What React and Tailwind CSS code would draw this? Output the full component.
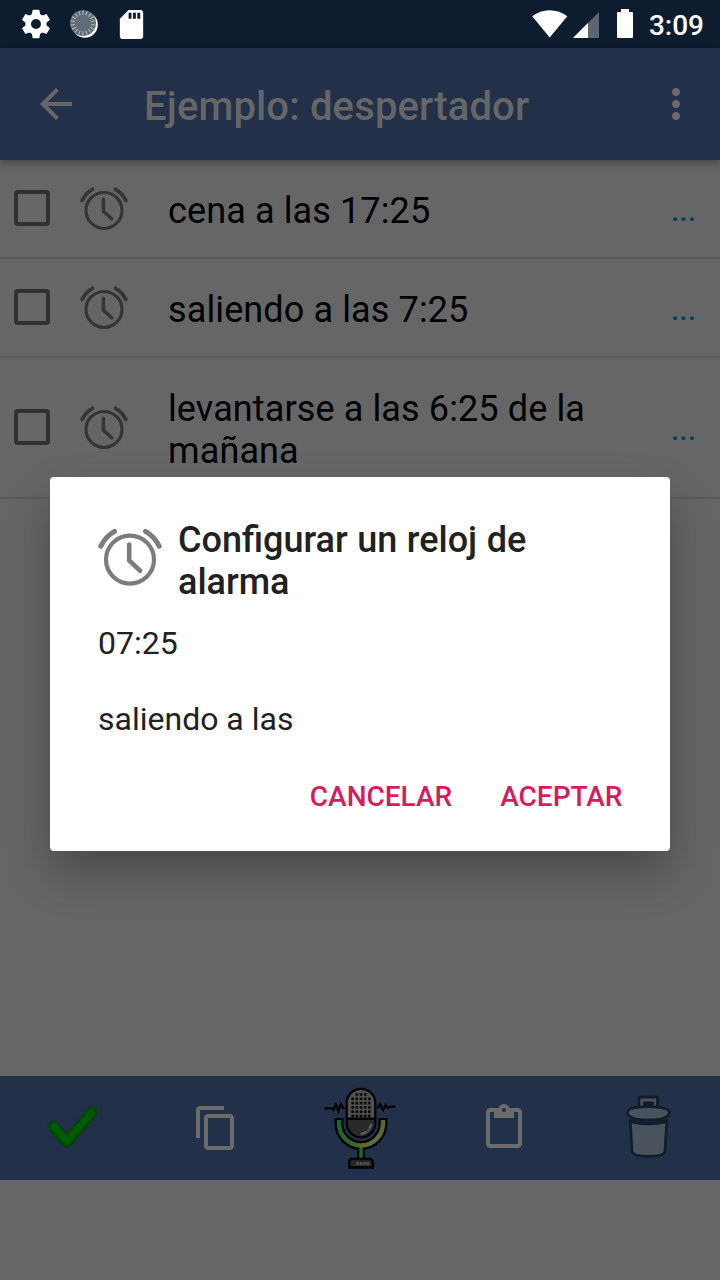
const spokes = Array.from({ length: 18 }, (_, i) => i * 20);

function Icon({ d, className }) {
  return (
    <svg viewBox="0 0 24 24" className={className} fill="currentColor">
      <path d={d} />
    </svg>
  );
}

const paths = {
  settings:
    "M19.43 12.98c.04-.32.07-.64.07-.98s-.03-.66-.07-.98l2.11-1.65c.19-.15.24-.42.12-.64l-2-3.46c-.12-.22-.39-.3-.61-.22l-2.49 1c-.52-.4-1.08-.73-1.69-.98l-.38-2.65C14.46 2.18 14.25 2 14 2h-4c-.25 0-.46.18-.49.42l-.38 2.65c-.61.25-1.17.59-1.69.98l-2.49-1c-.23-.09-.49 0-.61.22l-2 3.46c-.13.22-.07.49.12.64l2.11 1.65c-.04.32-.07.65-.07.98s.03.66.07.98l-2.11 1.65c-.19.15-.24.42-.12.64l2 3.46c.12.22.39.3.61.22l2.49-1c.52.4 1.08.73 1.69.98l.38 2.65c.03.24.24.42.49.42h4c.25 0 .46-.18.49-.42l.38-2.65c.61-.25 1.17-.59 1.69-.98l2.49 1c.23.09.49 0 .61-.22l2-3.46c.12-.22.07-.49-.12-.64l-2.11-1.65zM12 15.5c-1.93 0-3.5-1.57-3.5-3.5s1.57-3.5 3.5-3.5 3.5 1.57 3.5 3.5-1.57 3.5-3.5 3.5z",
  sdCard:
    "M18 2h-8L4.02 8 4 20c0 1.1.9 2 2 2h12c1.1 0 2-.9 2-2V4c0-1.1-.9-2-2-2zm-6 6h-2V4h2v4zm3 0h-2V4h2v4zm3 0h-2V4h2v4z",
  back: "M20 11H7.83l5.59-5.59L12 4l-8 8 8 8 1.41-1.41L7.83 13H20v-2z",
  more: "M12 8c1.1 0 2-.9 2-2s-.9-2-2-2-2 .9-2 2 .9 2 2 2zm0 2c-1.1 0-2 .9-2 2s.9 2 2 2 2-.9 2-2-.9-2-2-2zm0 6c-1.1 0-2 .9-2 2s.9 2 2 2 2-.9 2-2-.9-2-2-2z",
  copy: "M16 1H4c-1.1 0-2 .9-2 2v14h2V3h12V1zm3 4H8c-1.1 0-2 .9-2 2v14c0 1.1.9 2 2 2h11c1.1 0 2-.9 2-2V7c0-1.1-.9-2-2-2zm0 16H8V7h11v14z",
  paste:
    "M19 2h-4.18C14.4.84 13.3 0 12 0c-1.3 0-2.4.84-2.82 2H5c-1.1 0-2 .9-2 2v16c0 1.1.9 2 2 2h14c1.1 0 2-.9 2-2V4c0-1.1-.9-2-2-2zm-7 0c.55 0 1 .45 1 1s-.45 1-1 1-1-.45-1-1 .45-1 1-1zm7 18H5V4h2v3h10V4h2v16z",
};

function AlarmIcon({ className }) {
  return (
    <svg viewBox="0 0 64 60" className={className} fill="none" stroke="currentColor" strokeLinecap="round" strokeLinejoin="round">
      <circle cx="32" cy="32.6" r="24" strokeWidth="4.2" />
      <path d="M31.200 17.500L31.2 33.5L42.2 43.8" strokeWidth="4.600" />
      <path d="M2.8 19.2Q7.500 9.500 16.500 4.400M47.500 4.400Q56.500 9.500 61.200 19.200" strokeWidth="5" />
    </svg>
  );
}

function Spinner() {
  return (
    <svg viewBox="0 0 28 28" className="size-7">
      <circle cx="14.8" cy="14.8" r="13" fill="#fff" />
      <circle cx="13" cy="13" r="13" fill="#616c78" />
      <g stroke="#b8bdc3" strokeWidth="1">
        {spokes.map((a) => (
          <path key={a} d="M13 .6V4.800" transform={`rotate(${a} 13 13)`} />
        ))}
      </g>
    </svg>
  );
}

function StatusBar() {
  return (
    <div className="flex h-12 items-center bg-[#0d1c2e] pl-[19px] pr-4 text-white">
      <Icon d={paths.settings} className="size-[34px]" />
      <div className="ml-[17px] w-7"><Spinner /></div>
      <Icon d={paths.sdCard} className="ml-4 size-[35px]" />
      <svg viewBox="0 0 36 28" className="ml-auto h-7 w-9" fill="currentColor">
        <path d="M.2 6.2C10-1.9 25.500-1.900 35.300 6.200L17.700 27.500Z" />
      </svg>
      <svg viewBox="0 0 26 26" className="ml-[5px] mt-[2px] size-[26px]" fill="currentColor">
        <path d="M0 26L26 0V26Z" opacity=".33" />
        <path d="M0 26L15 11V26Z" />
      </svg>
      <svg viewBox="0 0 16 29" className="mb-[2px] ml-[18px] h-[29px] w-4" fill="currentColor">
        <path d="M4 0H12V3H15Q16 3 16 4V28Q16 29 15 29H1Q0 29 0 28V4Q0 3 1 3H4Z" />
      </svg>
      <span className="ml-4 pt-[3px] text-[28px] font-medium leading-8">3:09</span>
    </div>
  );
}

function Row({ children }) {
  return (
    <li className="flex items-center border-b-2 border-[#5b5b5b] pl-[14px] pr-6">
      <span className="mb-px size-9 rounded-[4px] border-4 border-[#303030]" />
      <AlarmIcon className="mb-px ml-[30px] h-[45px] w-12 text-[#353535]" />
      <p className="ml-10 w-[450px] pb-[25px] pt-[30px] text-[36px] leading-[42px] tracking-[0.12px] text-black">{children}</p>
      <button className="ml-auto pt-[5px] text-[30px] font-medium leading-8 text-[#00425a]">...</button>
    </li>
  );
}

function CheckIcon() {
  return (
    <svg viewBox="0 0 50 44" className="h-11 w-[50px]" fill="none" strokeLinecap="round" strokeLinejoin="round">
      <path d="M6.500 20.500L19.700 36L45 6" stroke="#0e3a24" strokeWidth="12" />
      <path d="M6.500 20.500L19.700 36L45 6" stroke="#004c00" strokeWidth="10" />
      <path d="M7.500 20.500L19.700 35L44.500 7" stroke="#005c00" strokeWidth="6" />
    </svg>
  );
}

const gridX = [28.7, 32.8, 37, 41.2, 45.3];
const gridY = [11.8, 16.1, 20.4, 24.7, 29];

function MicIcon() {
  return (
    <svg viewBox="0 0 72 82" className="h-[82px] w-[72px]">
      <defs>
        <linearGradient id="cradle" gradientUnits="userSpaceOnUse" x1="14" y1="0" x2="60" y2="0">
          <stop offset="0" stopColor="#1c6334" />
          <stop offset=".22" stopColor="#2b6430" />
          <stop offset=".55" stopColor="#5f6b24" />
          <stop offset=".8" stopColor="#656b4a" />
          <stop offset="1" stopColor="#566a26" />
        </linearGradient>
      </defs>
      <g fill="none" stroke="#020202">
        <path d="M.3 21.300H7.700L9.500 23L12 17.500L14.300 24L17 17L19.700 22" strokeWidth="2.200" />
        <path d="M53.700 21.500L56 17L59 23L61.700 18L63.700 21L66 19.700H71.500" strokeWidth="2.200" />
        <path d="M37 58V73" strokeWidth="8" />
        <path d="M15 31V36.400A22 22 0 0 0 59 36.400V31" strokeWidth="9" />
      </g>
      <path d="M37 59V72" stroke="#1f6a33" strokeWidth="3.400" />
      <path d="M15 33V36.400A22 22 0 0 0 59 36.400V33" fill="none" stroke="url(#cradle)" strokeWidth="4.400" />
      <path d="M21.600 16.200A15.400 15.400 0 0 1 52.400 16.200V36A15.400 15.400 0 0 1 21.600 36Z" fill="#020202" />
      <path d="M23.800 16.200A13.200 13.200 0 0 1 50.200 16.200V30.500H23.800Z" fill="#505050" />
      <path d="M23.800 33H50.200V36A13.200 13.200 0 0 1 23.800 36Z" fill="#292929" />
      <g fill="#080808">
        {gridY.map((y) => gridX.map((x) => <rect key={`${x}-${y}`} x={x - 1.3} y={y - 1.3} width="2.6" height="2.6" />))}
        <path d="M31.500 6.200H34.100V8.800H31.500ZM35.700 6.200H38.300V8.800H35.700ZM39.900 6.200H42.500V8.800H39.900Z" />
      </g>
      <path d="M36.500 47Q45 46 47.500 37" fill="none" stroke="#5e5e5e" strokeWidth="2.400" strokeDasharray="7 1 2 1" />
      <path d="M27 72H47L48.700 74V80.500H25.300V74Z" fill="#292929" stroke="#020202" strokeWidth="2.400" />
      <path d="M32.500 76.500H45" stroke="#5c5c5c" strokeWidth="2.400" strokeDasharray="2.400 1" />
    </svg>
  );
}

function TrashIcon() {
  return (
    <svg viewBox="0 0 44 64" className="h-16 w-11 overflow-visible" fill="#4a525e" stroke="#131e2c" strokeWidth="2.800" strokeLinejoin="round">
      <path d="M4.200 24.500L6 55.500Q7 60.300 22.500 60.300Q38 60.300 39 55.500L40.800 24.500Q22 31 4.200 24.500Z" />
      <path d="M13 13V3Q13 1 15 1H29.500Q31.500 1 31.500 3V13Z" />
      <path d="M17.500 6H27.200V11H17.500Z" fill="#131e2c" stroke="#131e2c" strokeWidth="1" />
      <path d="M1.200 16.500Q1.500 12.500 10 11.300Q22 10 34 11.300Q43 12.500 43.500 16.500Q42.500 24 22.300 24Q2.500 24 1.200 16.500Z" />
      <path d="M5 25.500Q22 29.500 40 25.500" fill="none" strokeWidth="3.600" />
    </svg>
  );
}

export default function App() {
  return (
    <div className="relative flex h-[1280px] w-[720px] flex-col overflow-hidden bg-[#666666] font-['Roboto',sans-serif]">
      <StatusBar />
      <header className="relative flex h-28 items-center bg-[#223049] pl-8 pr-5 text-[#6b6b6b] shadow-[0_3px_8px_rgba(0,0,0,0.35)]">
        <Icon d={paths.back} className="size-12 text-[#666666]" />
        <h1 className="ml-16 mt-[6px] text-[40px] font-medium leading-[48px] tracking-[0.13px] text-[#666666]">Ejemplo: despertador</h1>
        <Icon d={paths.more} className="ml-auto size-12" />
      </header>
      <ul>
        <Row>cena a las 17:25</Row>
        <Row>saliendo a las 7:25</Row>
        <Row>levantarse a las 6:25 de la mañana</Row>
      </ul>
      <nav className="mb-[100px] mt-auto grid h-[104px] grid-cols-5 place-items-center bg-[#223049] text-[#6b6b6b]">
        <CheckIcon />
        <Icon d={paths.copy} className="size-12" />
        <MicIcon />
        <Icon d={paths.paste} className="size-12" />
        <TrashIcon />
      </nav>
      <section role="dialog" className="absolute left-[50px] top-[477px] flex h-[374px] w-[620px] flex-col rounded-[4px] bg-white px-12 pt-[42px] text-[#212121] shadow-[0_22px_44px_rgba(0,0,0,0.28)]">
        <div className="flex">
          <AlarmIcon className="mt-2 h-[60px] w-16 text-[#7c7c7c]" />
          <h2 className="ml-4 w-[400px] text-[36px] font-medium leading-[42px] [word-spacing:0.6px]">Configurar un reloj de alarma</h2>
        </div>
        <p className="mt-[21px] text-[32px] leading-[38px]">07:25</p>
        <p className="mt-[38px] text-[32px] leading-[38px]">saliendo a las</p>
        <div className="mt-[43px] -mr-px flex justify-end gap-12 pr-[0.5px] text-[28px] font-medium leading-8 text-[#d81b60]">
          <button>CANCELAR</button>
          <button>ACEPTAR</button>
        </div>
      </section>
    </div>
  );
}
